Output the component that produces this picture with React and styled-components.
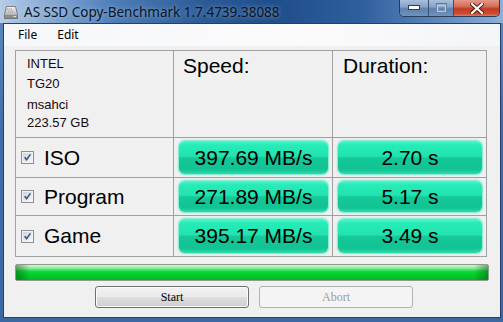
import React from "react";
import styled, { createGlobalStyle } from "styled-components";

const GlobalStyle = createGlobalStyle`
  html, body {
    margin: 0;
    padding: 0;
  }
  body {
    width: 503px;
    height: 322px;
    overflow: hidden;
    background: #3b6aa3;
    font-family: "Liberation Sans", Arial, sans-serif;
  }
`;

const rows = [
    { name: "ISO", speed: "397.69 MB/s", duration: "2.70 s" },
    { name: "Program", speed: "271.89 MB/s", duration: "5.17 s" },
    { name: "Game", speed: "395.17 MB/s", duration: "3.49 s" },
];

const DriveIcon = () => (
    <svg width="16" height="16" viewBox="0 0 16 16">
        <defs>
            <linearGradient id="drv" x1="0" y1="0" x2="0" y2="1">
                <stop offset="0" stopColor="#f4f4f4" />
                <stop offset="0.55" stopColor="#c4c4c4" />
                <stop offset="1" stopColor="#858585" />
            </linearGradient>
        </defs>
        <path d="M3.5 2.5 H12.5 L14.5 10.5 V14.5 H1.5 V10.5 Z" fill="url(#drv)" stroke="#6a6a6a" strokeWidth="0.8" />
        <path d="M4 4 L6 9 M6 4 L8 9 M8 4 L10 9" stroke="#a9a9a9" strokeWidth="0.8" />
        <rect x="2" y="11" width="12" height="3" fill="#8c8c8c" />
        <rect x="10.5" y="12" width="2.5" height="1" fill="#e6e6e6" />
    </svg>
);

const MinGlyph = () => (
    <svg width="12" height="6" viewBox="0 0 12 6">
        <rect x="0.5" y="0.5" width="11" height="4" fill="#ffffff" stroke="#2e3f58" />
    </svg>
);

const MaxGlyph = () => (
    <svg width="11" height="10" viewBox="0 0 11 10">
        <rect x="0.5" y="0.5" width="10" height="9" fill="none" stroke="#5f7898" />
        <rect x="1.5" y="2.5" width="8" height="6" fill="none" stroke="#b9c8dc" strokeWidth="1.4" />
    </svg>
);

const CloseGlyph = () => (
    <svg width="14" height="11" viewBox="0 0 14 11">
        <path d="M2 1 L12 10 M12 1 L2 10" stroke="#4a1a12" strokeWidth="4" strokeLinecap="square" />
        <path d="M2 1 L12 10 M12 1 L2 10" stroke="#ffffff" strokeWidth="2.2" strokeLinecap="square" />
    </svg>
);

const CheckMark = () => (
    <svg width="13" height="13" viewBox="0 0 13 13">
        <defs>
            <linearGradient id="cbx" x1="0" y1="0" x2="1" y2="1">
                <stop offset="0" stopColor="#cfd3d8" />
                <stop offset="1" stopColor="#f7f7f7" />
            </linearGradient>
        </defs>
        <rect x="0.5" y="0.5" width="12" height="12" fill="#f3f3f3" stroke="#8e8f8f" />
        <rect x="2" y="2" width="9" height="9" fill="url(#cbx)" />
        <path d="M3.6 6.2 L5.6 8.6 L9.4 3.4" stroke="#3d5390" strokeWidth="1.6" fill="none" />
    </svg>
);

export default function App() {
    return (
        <>
            <GlobalStyle />
            <Window>
                <TitleBar>
                    <DriveIcon />
                    <TitleText>AS SSD Copy-Benchmark 1.7.4739.38088</TitleText>
                    <Controls>
                        <ControlButton $kind="min"><MinGlyph /></ControlButton>
                        <ControlButton $kind="max"><MaxGlyph /></ControlButton>
                        <ControlButton $kind="close"><CloseGlyph /></ControlButton>
                    </Controls>
                </TitleBar>
                <Client>
                    <MenuBar>
                        <MenuItem>File</MenuItem>
                        <MenuItem>Edit</MenuItem>
                    </MenuBar>
                    <Main>
                        <Table>
                            <InfoCell>
                                <InfoLine>INTEL</InfoLine>
                                <InfoLine>TG20</InfoLine>
                                <InfoLine $shift={1}>msahci</InfoLine>
                                <InfoLine $shift={-2}>223.57 GB</InfoLine>
                            </InfoCell>
                            <HeadCell $pad={9}>Speed:</HeadCell>
                            <HeadCell $pad={10}>Duration:</HeadCell>
                            {rows.map((row) => (
                                <React.Fragment key={row.name}>
                                    <LabelCell>
                                        <CheckMark />
                                        <Label>{row.name}</Label>
                                    </LabelCell>
                                    <ValueCell>
                                        <ValueBox>{row.speed}</ValueBox>
                                    </ValueCell>
                                    <ValueCell>
                                        <ValueBox>{row.duration}</ValueBox>
                                    </ValueCell>
                                </React.Fragment>
                            ))}
                        </Table>
                        <Progress />
                        <ButtonRow>
                            <PushButton>Start</PushButton>
                            <PushButton disabled>Abort</PushButton>
                        </ButtonRow>
                    </Main>
                </Client>
            </Window>
        </>
    );
}

const Window = styled.div`
    width: 503px;
    height: 322px;
    display: flex;
    flex-direction: column;
    background: linear-gradient(to bottom, #5d8bc2 0%, #3f6ea8 40%, #3a68a2 100%);
`;

const TitleBar = styled.div`
    height: 23px;
    display: flex;
    align-items: center;
    padding-left: 3px;
    background: linear-gradient(
        to right,
        #b7cde6 0%,
        #8fb0d8 8%,
        #4f7fb9 22%,
        #2c5b96 40%,
        #1f4e8b 55%,
        #2f5f9c 72%,
        #5f8ac0 88%,
        #8cb0da 100%
    );
`;

const TitleText = styled.span`
    margin-left: 5px;
    font-family: "Noto Sans", "Open Sans", sans-serif;
    font-size: 13.5px;
    color: #0c1424;
    text-shadow: 0 0 5px rgba(220, 235, 255, 0.55);
    white-space: nowrap;
`;

const Controls = styled.div`
    margin-left: auto;
    margin-right: 3px;
    align-self: flex-start;
    display: flex;
    border: 1px solid #2a3c57;
    border-top: none;
    border-radius: 0 0 5px 5px;
    overflow: hidden;
`;

const controlWidths = { min: 28, max: 25, close: 46 };

const ControlButton = styled.div`
    width: ${(p) => controlWidths[p.$kind]}px;
    height: 16px;
    display: flex;
    align-items: center;
    justify-content: center;
    box-sizing: border-box;
    border-left: ${(p) => (p.$kind === "min" ? "none" : "1px solid #3b4f6e")};
    background: ${(p) =>
        p.$kind === "close"
            ? "linear-gradient(to bottom, #e5988a 0%, #d56d58 40%, #c23c22 55%, #cf4a30 85%, #e07a5c 100%)"
            : "linear-gradient(to bottom, #a9bfdc 0%, #87a3c9 42%, #5f80b0 55%, #7092c0 100%)"};
`;

const Client = styled.div`
    flex: 1;
    margin: 0 2px 4px 3px;
    border: 1px solid #22406a;
    background: #f0f0f0;
    display: flex;
    flex-direction: column;
`;

const MenuBar = styled.div`
    height: 22px;
    display: flex;
    padding-left: 4px;
    background: linear-gradient(to right, #f6f7f9, #fbfbfc 60%, #f4f5f7);
`;

const MenuItem = styled.span`
    padding: 0 10px;
    font-family: "Noto Sans", "Open Sans", sans-serif;
    font-size: 12px;
    line-height: 22px;
    color: #000;
`;

const Main = styled.div`
    display: flex;
    flex-direction: column;
    padding: 4px 0 0 11px;
`;

const Table = styled.div`
    display: grid;
    grid-template-columns: 157px 158px 153px;
    grid-template-rows: 86px 39px 37px 40px;
    gap: 1px;
    width: fit-content;
    background: #a0a0a0;
    border: 1px solid #a0a0a0;
`;

const Cell = styled.div`
    background: #f0f0f0;
`;

const InfoCell = styled(Cell)`
    padding: 3px 0 0 11px;
    display: flex;
    flex-direction: column;
`;

const InfoLine = styled.div`
    font-size: 13px;
    line-height: 20px;
    color: #1a0a0a;
    margin-top: ${(p) => p.$shift || 0}px;
`;

const HeadCell = styled(Cell)`
    padding: 3px 0 0 ${(p) => p.$pad}px;
    font-size: 21px;
    line-height: 23px;
    color: #000;
`;

const LabelCell = styled(Cell)`
    display: flex;
    align-items: center;
    gap: 10px;
    padding-left: 5px;
`;

const Label = styled.span`
    font-size: 21px;
    line-height: 24px;
    color: #000;
`;

const ValueCell = styled(Cell)`
    display: flex;
    padding: 3px 4px 3px 5px;
`;

const ValueBox = styled.div`
    flex: 1;
    display: flex;
    align-items: center;
    justify-content: center;
    border-radius: 6px;
    font-size: 21px;
    color: #000;
    background: linear-gradient(
        to bottom,
        #4ff7cf 0%,
        #27ecb8 12%,
        #22e3b0 46%,
        #14c898 52%,
        #12c393 86%,
        #2fdbad 100%
    );
    box-shadow: 0 0 0 1px #8cebd3, 0 0 2px 1px rgba(120, 230, 200, 0.6);
`;

const Progress = styled.div`
    margin-top: 7px;
    width: 474px;
    height: 17px;
    box-sizing: border-box;
    border: 1px solid #8f9a8f;
    border-radius: 2px;
    background:
        linear-gradient(to right, rgba(0, 70, 10, 0.45) 0, rgba(0, 70, 10, 0) 14px, rgba(0, 70, 10, 0) calc(100% - 14px), rgba(0, 70, 10, 0.45) 100%),
        linear-gradient(to bottom, #d4f7d4 0%, #8ae89a 22%, #12d93a 42%, #00d128 62%, #00c424 85%, #17a83a 100%);
`;

const ButtonRow = styled.div`
    display: flex;
    gap: 10px;
    margin-top: 5px;
    padding-left: 80px;
`;

const PushButton = styled.button`
    width: 154px;
    height: 22px;
    padding: 0;
    box-sizing: border-box;
    border-radius: 3px;
    font-family: "Liberation Serif", "Times New Roman", serif;
    font-size: 12px;
    border: 1px solid #707070;
    color: #000;
    background: linear-gradient(to bottom, #f2f2f2 0%, #ebebeb 48%, #dddddd 52%, #cfcfcf 100%);
    box-shadow: inset 0 0 0 1px #fcfcfc;

    &:disabled {
        border-color: #adb2b5;
        color: #9d9d9d;
        background: #f4f4f4;
        box-shadow: none;
    }
`;
